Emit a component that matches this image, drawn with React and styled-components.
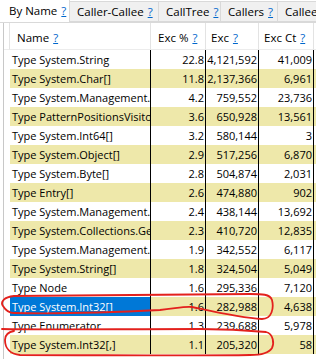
import React from 'react';
import styled, { createGlobalStyle } from 'styled-components';

const GlobalStyle = createGlobalStyle`
  html, body { margin: 0; padding: 0; background: #ffffff; }
  body { font-family: 'Open Sans', 'Noto Sans', sans-serif; font-size: 11px; color: #000; overflow: hidden; }
`;

const tabs = [
  { name: 'By Name', width: 70, active: true },
  { name: 'Caller-Callee', width: 90 },
  { name: 'CallTree', width: 63 },
  { name: 'Callers', width: 58 },
  { name: 'Callees', width: 60 },
];

const columns = ['Exc %', 'Exc', 'Exc Ct'];

const rows = [
  ['Type System.String', '22.8', '4,121,592', '41,009'],
  ['Type System.Char[]', '11.8', '2,137,366', '6,961'],
  ['Type System.Management.Automation', '4.2', '759,552', '23,736'],
  ['Type PatternPositionsVisitor', '3.6', '650,928', '13,561'],
  ['Type System.Int64[]', '3.2', '580,144', '3'],
  ['Type System.Object[]', '2.9', '517,256', '6,870'],
  ['Type System.Byte[]', '2.8', '504,874', '2,031'],
  ['Type Entry[]', '2.6', '474,880', '902'],
  ['Type System.Management.Automation', '2.4', '438,144', '13,692'],
  ['Type System.Collections.Generic', '2.3', '410,720', '12,835'],
  ['Type System.Management.Automation', '1.9', '342,552', '6,117'],
  ['Type System.String[]', '1.8', '324,504', '5,049'],
  ['Type Node', '1.6', '295,336', '7,120'],
  ['Type System.Int32[]', '1.6', '282,988', '4,638'],
  ['Type Enumerator', '1.3', '239,688', '5,978'],
  ['Type System.Int32[,]', '1.1', '205,320', '58'],
];

const SELECTED = 13;

const Frame = styled.div`
  position: relative;
  width: 316px;
  height: 359px;
  overflow: hidden;
`;

const TabStrip = styled.div`
  display: flex;
  align-items: flex-end;
  height: 22px;
  border-bottom: 1px solid #d9d9d9;
  white-space: nowrap;
  overflow: hidden;
`;

const Tab = styled.div`
  flex: none;
  box-sizing: border-box;
  width: ${p => p.$w}px;
  height: ${p => (p.$active ? '23px' : '21px')};
  margin-bottom: ${p => (p.$active ? '-1px' : '0')};
  margin-left: ${p => (p.$active ? '0' : '-1px')};
  padding: ${p => (p.$active ? '2px 0 0 9px' : '1px 0 0 7px')};
  line-height: 18px;
  background: ${p => (p.$active ? '#ffffff' : '#f0f0f0')};
  border: ${p => (p.$active ? 'none' : '1px solid #d9d9d9')};
  border-right: 1px solid #d9d9d9;
  font-size: 11.5px;
  overflow: hidden;
`;

const Help = styled.span`
  color: #0066cc;
  text-decoration: underline;
  margin-left: 4px;
`;

const Panel = styled.div`
  margin-left: 3px;
  border-left: 1px solid #c8c8c8;
  height: 336px;
`;

const Grid = styled.div`
  display: grid;
  grid-template-columns: 6px 141px 55px 53px 55px 40px;
  grid-template-rows: 27px;
  grid-auto-rows: 19px;
  width: max-content;
`;

const HeaderCell = styled.div`
  box-sizing: border-box;
  padding-left: ${p => p.$pad ?? 6}px;
  display: flex;
  align-items: center;
  padding-top: 3px;
  border-right: 1px solid #e3e3e3;
  border-bottom: 1px solid #ececec;
  background: #ffffff;
  font-size: 11.5px;
  white-space: nowrap;
  overflow: hidden;
`;

const RowHead = styled.div`
  background: #ffffff;
`;

const Cell = styled.div`
  box-sizing: border-box;
  border-right: 1px solid #000000;
  background: ${p => (p.$selected ? '#0078d7' : p.$alt ? '#eee8aa' : '#ffffff')};
  color: ${p => (p.$selected ? '#ffffff' : '#000000')};
  text-align: ${p => (p.$num ? 'right' : 'left')};
  padding: ${p => (p.$num ? '0 1px 0 0' : '0 0 0 2px')};
  line-height: 19px;
  font-size: 11px;
  white-space: nowrap;
  overflow: hidden;
  text-overflow: clip;
`;

const Marks = styled.svg`
  position: absolute;
  left: 0;
  top: 0;
  pointer-events: none;
`;

export default function App() {
  return (
    <Frame>
      <GlobalStyle />
      <TabStrip>
        {tabs.map(t => (
          <Tab key={t.name} $w={t.width} $active={t.active}>
            {t.name}
            <Help>?</Help>
          </Tab>
        ))}
      </TabStrip>
      <Panel>
        <Grid>
          <HeaderCell $pad={0} />
          <HeaderCell $pad={7}>
            Name<Help>?</Help>
          </HeaderCell>
          {columns.map(c => (
            <HeaderCell key={c} $pad={c === 'Exc %' ? 7 : 5}>
              {c}
              <Help>?</Help>
            </HeaderCell>
          ))}
          <HeaderCell $pad={5} />
          {rows.map((r, i) => (
            <React.Fragment key={i}>
              <RowHead />
              <Cell $alt={i % 2 === 1} $selected={i === SELECTED}>
                {r[0]}
              </Cell>
              <Cell $alt={i % 2 === 1} $num>{r[1]}</Cell>
              <Cell $alt={i % 2 === 1} $num>{r[2]}</Cell>
              <Cell $alt={i % 2 === 1} $num>{r[3]}</Cell>
              <Cell $alt={i % 2 === 1} />
            </React.Fragment>
          ))}
        </Grid>
      </Panel>
      <Marks width="316" height="359" viewBox="0 0 316 359">
        <path
          d="M14 296 C4 297 0 302 3 306 C6 311 10 313 14 313 C60 314 120 312 160 310 C178 308 186 306 192 307 C215 312 240 318 262 319 C272 319 274 308 272 300 C270 294 262 294 250 294 L14 296"
          fill="none"
          stroke="#e3211d"
          strokeWidth="1.8"
          strokeLinecap="round"
        />
        <path
          d="M2 329 C40 330 120 329 200 329 C230 329 255 331 266 332 C274 334 274 344 272 348 C269 353 262 355 250 355 C200 356 100 355 20 355 C10 354 5 348 5 340 C5 335 8 332 14 331"
          fill="none"
          stroke="#e3211d"
          strokeWidth="1.8"
          strokeLinecap="round"
        />
      </Marks>
    </Frame>
  );
}
